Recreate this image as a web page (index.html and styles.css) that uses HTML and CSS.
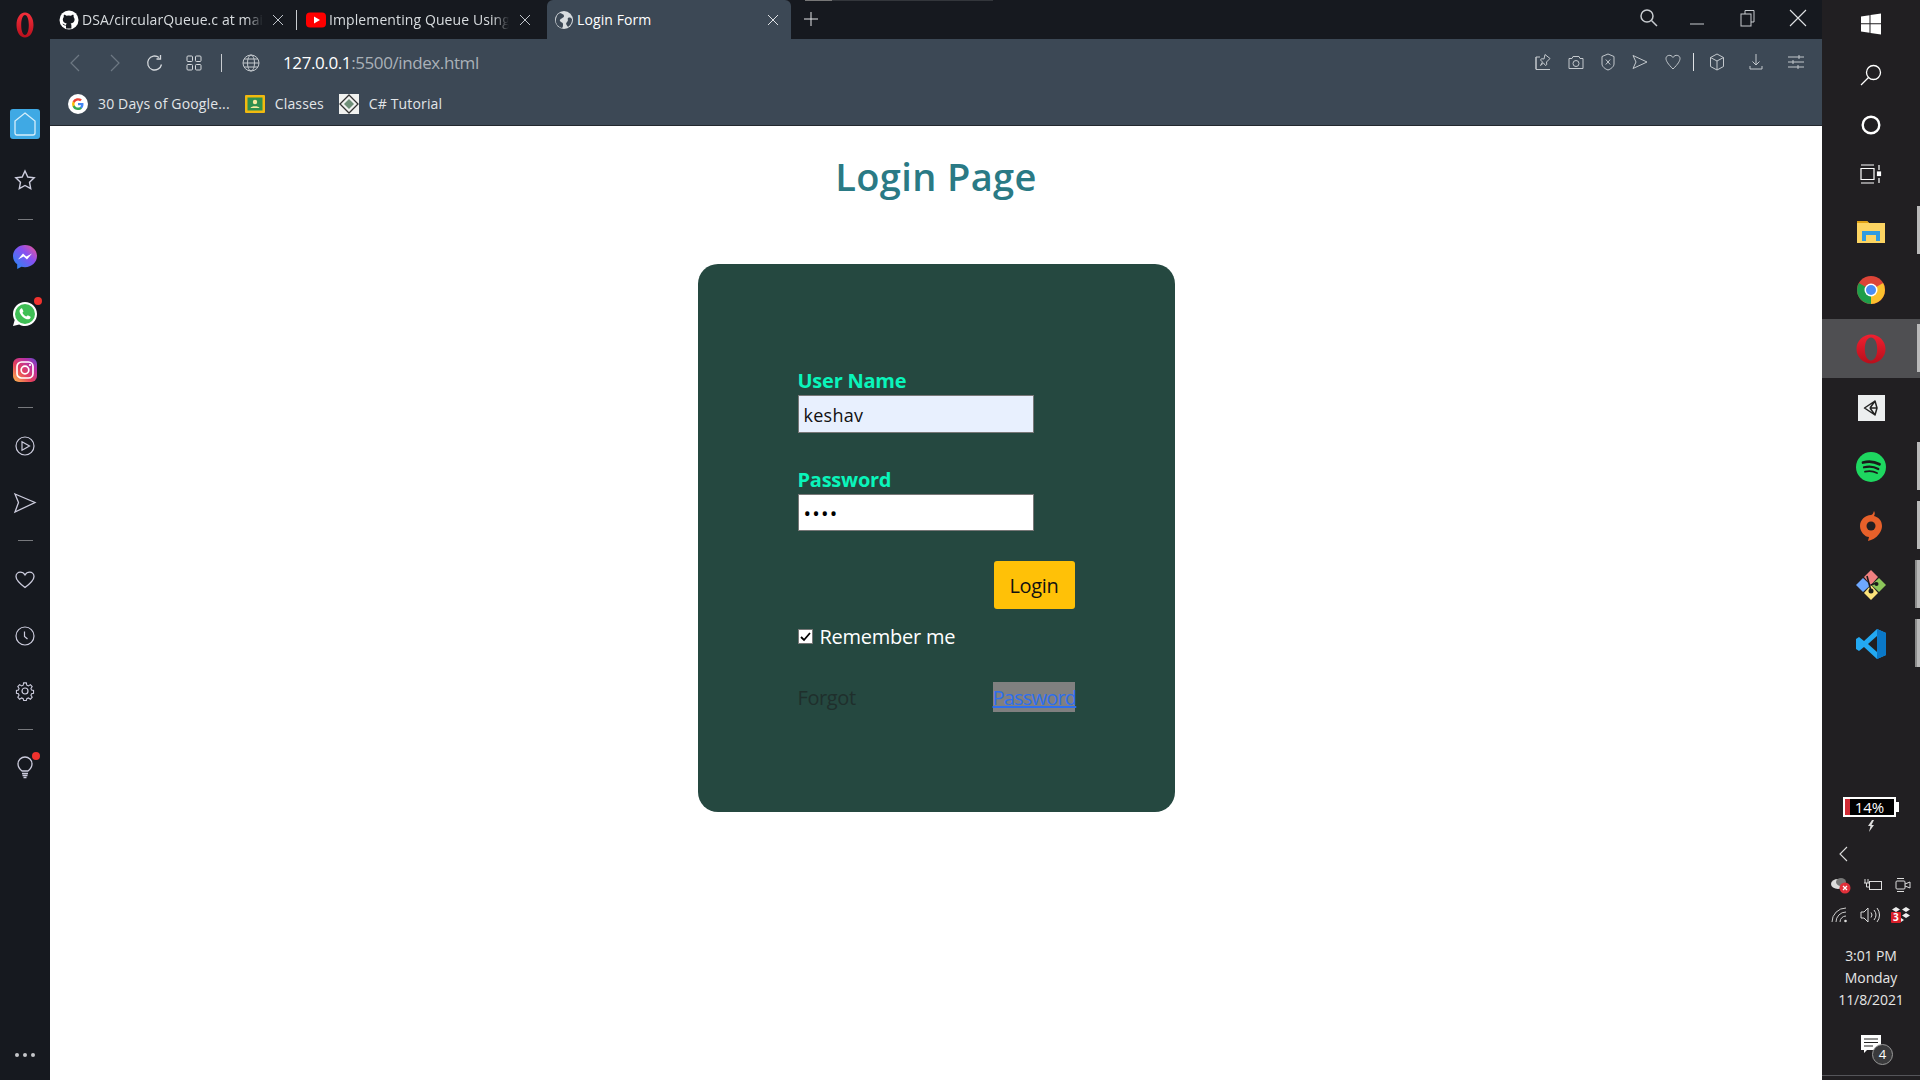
FILE: index.html
```html
<!DOCTYPE html>
<html lang="en">
<head>
    <meta charset="UTF-8">
    <meta name="viewport" content="width=device-width, initial-scale=1.0">
    <title>Login Form</title>
    <link rel="stylesheet" href="styles.css">
</head>
<body>
<div class="screen">

    <!-- Opera sidebar -->
    <aside class="sidebar">
        <svg class="opera" width="18" height="26" viewBox="0 0 18 26"><defs><linearGradient id="og" x1="0" y1="0" x2="0" y2="1"><stop offset="0" stop-color="#f5303c"/><stop offset="1" stop-color="#b80f1c"/></linearGradient></defs><path fill-rule="evenodd" d="M9 .5C4 .5.500 6 .500 13S4 25.500 9 25.500 17.500 20 17.500 13 14 .5 9 .5zM9 3c2.300 0 3.800 4.500 3.800 10S11.300 23 9 23 5.200 18.500 5.200 13 6.700 3 9 3z" fill="url(#og)"/></svg>
        <div class="side-home"><svg width="24" height="26" viewBox="0 0 24 26" fill="none" stroke="#d6eefa" stroke-width="1.3"><path d="M12 2 22 10V22Q22 24 20 24H4Q2 24 2 22V10Z"/></svg></div>
        <svg class="side-icon star" width="22" height="22" viewBox="0 0 22 22" fill="none" stroke="#ccd" stroke-width="1.4"><path d="M11 2l2.8 6 6.4.8-4.700 4.400 1.200 6.400L11 16.500 5.300 19.600l1.200-6.400L1.800 8.800 8.200 8z"/></svg>
        <div class="side-rule r1"></div>
        <svg class="side-icon msgr" width="26" height="26" viewBox="0 0 26 26"><defs><linearGradient id="mg" x1="0" y1="1" x2="1" y2="0"><stop offset="0" stop-color="#1c8df5"/><stop offset=".6" stop-color="#8a4ff0"/><stop offset="1" stop-color="#f4568c"/></linearGradient></defs><path d="M13 1C6.500 1 1 5.800 1 12c0 3.400 1.600 6.300 4.200 8.300V25l4.200-2.300c1.100.3 2.300.5 3.600.5 6.500 0 12-4.900 12-11.200S19.500 1 13 1z" fill="url(#mg)"/><path d="M6 15.500l5-6 3.300 3 5.700-3-5 6-3.300-3z" fill="#fff"/></svg>
        <div class="side-badged wa"><svg width="26" height="26" viewBox="0 0 26 26"><path d="M13 1C6.400 1 1 6.300 1 12.900c0 2.200.6 4.300 1.700 6.100L1 25l6.200-1.600c1.800 1 3.800 1.500 5.800 1.500 6.600 0 12-5.400 12-12S19.600 1 13 1z" fill="#fff"/><circle cx="13" cy="13" r="10" fill="#3fbf55"/><path d="M9 7.500c-1.500 1-2 2.800-.8 5 1.300 2.500 3.200 4.400 5.800 5.500 2 .8 3.800.2 4.500-1.200.3-.6.200-1-.3-1.300l-2-1c-.5-.2-.8-.1-1.100.3l-.7.8c-1.800-.7-3.200-2.100-4-3.900l.7-.7c.3-.3.400-.7.200-1.100l-.9-2c-.3-.6-.9-.7-1.400-.4z" fill="#fff"/></svg><span class="red-dot"></span></div>
        <svg class="side-icon ig" width="26" height="26" viewBox="0 0 26 26"><defs><linearGradient id="ig" x1="0" y1="1" x2="1" y2="0"><stop offset="0" stop-color="#fdc04e"/><stop offset=".4" stop-color="#e5405c"/><stop offset=".75" stop-color="#b52fa8"/><stop offset="1" stop-color="#5a50d0"/></linearGradient></defs><rect x="1" y="1" width="24" height="24" rx="6" fill="url(#ig)"/><rect x="5" y="5" width="16" height="16" rx="4.500" fill="none" stroke="#fff" stroke-width="1.700"/><circle cx="13" cy="13" r="3.800" fill="none" stroke="#fff" stroke-width="1.700"/><circle cx="18" cy="8" r="1.100" fill="#fff"/></svg>
        <div class="side-rule r2"></div>
        <svg class="side-icon player" width="20" height="20" viewBox="0 0 20 20" fill="none" stroke="#ccd" stroke-width="1.200"><circle cx="10" cy="10" r="9"/><path d="M7 5.800 14.500 10 7 14.200z"/></svg>
        <svg class="side-icon flow" width="24" height="22" viewBox="0 0 24 22" fill="none" stroke="#ccd" stroke-width="1.300"><path d="M2 2 22 10.500 2 20 5.500 10.500z"/></svg>
        <div class="side-rule r3"></div>
        <svg class="side-icon heart" width="20" height="18" viewBox="0 0 20 18" fill="none" stroke="#ccd" stroke-width="1.300"><path d="M10 16.500C4 12 1 9 1 5.500 1 3 3 1.200 5.300 1.200 7.200 1.200 9 2.300 10 4 11 2.300 12.800 1.200 14.700 1.200 17 1.200 19 3 19 5.500 19 9 16 12 10 16.500z"/></svg>
        <svg class="side-icon clock" width="20" height="20" viewBox="0 0 20 20" fill="none" stroke="#ccd" stroke-width="1.200"><circle cx="10" cy="10" r="9"/><path d="M9.500 5.500v5l3 2.500"/></svg>
        <svg class="side-icon gear" width="20" height="20" viewBox="0 0 20 20" fill="none" stroke="#ccd" stroke-width="1.200"><circle cx="10" cy="10" r="3"/><path d="M8.500 1h3l.5 2.500 1.800.8 2.200-1.400 2 2.200-1.400 2.200.7 1.700 2.200.5v3l-2.200.5-.7 1.700 1.400 2.200-2 2.200-2.200-1.400-1.800.8-.5 2h-3l-.5-2-1.800-.8-2.200 1.400-2-2.200 1.400-2.200-.7-1.700-2.200-.5v-3l2.200-.5.7-1.700-1.400-2.200 2-2.200 2.200 1.400 1.800-.8z" transform="translate(1 1) scale(.9)"/></svg>
        <div class="side-rule r4"></div>
        <div class="side-badged bulb"><svg width="18" height="24" viewBox="0 0 18 24" fill="none" stroke="#ccd" stroke-width="1.300"><path d="M6 16C3.500 14 2 12 2 9a7 7 0 0 1 14 0c0 3-1.500 5-4 7z"/><path d="M6 18.500h6M6.500 20.500h5M7.500 22.500h3"/></svg><span class="red-dot small"></span></div>
        <div class="side-more"><i></i><i></i><i></i></div>
    </aside>

    <div class="browser">
        <!-- tabs -->
        <div class="tabbar">
            <div class="tab t1">
                <svg class="fav" width="20" height="20" viewBox="0 0 20 20"><circle cx="10" cy="10" r="9.500" fill="#fff"/><path d="M7 18.500v-3c-2.500.4-3-1-3.500-2 2 .5 2 1.800 3.500 1.500.1-.8.400-1.200.8-1.500-2.600-.4-4-1.500-4-4 0-1 .4-1.800 1-2.500-.2-.8-.1-1.700.2-2.300 1 0 1.900.5 2.500 1a8 8 0 0 1 4.400 0c.6-.5 1.500-1 2.500-1 .3.6.4 1.500.2 2.300.6.700 1 1.500 1 2.500 0 2.500-1.400 3.600-4 4 .5.4.8 1 .8 2v3z" fill="#16191f"/></svg>
                <span class="tab-title fade">DSA/circularQueue.c at mai</span>
                <svg class="tab-x" width="14" height="14" viewBox="0 0 14 14" stroke="#bfc4ca" stroke-width="1"><path d="M2 2l10 10M12 2 2 12"/></svg>
            </div>
            <div class="tab-sep"></div>
            <div class="tab t2">
                <svg class="fav" width="20" height="16" viewBox="0 0 20 16"><rect width="20" height="15" y=".5" rx="4" fill="#f00"/><path d="M8 4.500v7l6-3.500z" fill="#fff"/></svg>
                <span class="tab-title fade">Implementing Queue Using</span>
                <svg class="tab-x" width="14" height="14" viewBox="0 0 14 14" stroke="#bfc4ca" stroke-width="1"><path d="M2 2l10 10M12 2 2 12"/></svg>
            </div>
            <div class="tab t3">
                <svg class="fav" width="18" height="18" viewBox="0 0 18 18"><circle cx="9" cy="9" r="9" fill="#d8dcdf"/><path d="M5 2c2 1 4 1 4 3S6 7 5 9s3 2 3 4 0 3-1 4C3 16 0 12 1 8s2-5 4-6zM13 7c2-1 3 0 4 1 0 3-1 6-4 8-1-2-3-3-1-5s0-3 1-4z" fill="#3c4855"/></svg>
                <span class="tab-title">Login Form</span>
                <svg class="tab-x" width="14" height="14" viewBox="0 0 14 14" stroke="#dfe2e5" stroke-width="1"><path d="M2 2l10 10M12 2 2 12"/></svg>
            </div>
            <svg class="new-tab" width="16" height="16" viewBox="0 0 16 16" stroke="#e4e6e8" stroke-width="1"><path d="M8 1v14M1 8h14"/></svg>
            <div class="window-btns">
                <svg width="20" height="20" viewBox="0 0 20 20" fill="none" stroke="#c8ccd0" stroke-width="1.500"><circle cx="8" cy="8" r="6"/><path d="M12.500 12.500 18 18"/></svg>
                <svg class="w-min" width="16" height="16" viewBox="0 0 16 16" stroke="#c8ccd0" stroke-width="1"><path d="M1 14h14"/></svg>
                <svg class="w-max" width="18" height="18" viewBox="0 0 18 18" fill="none" stroke="#c8ccd0" stroke-width="1"><rect x="2" y="5" width="10" height="12"/><path d="M6 5V1.500h9V13h-3"/></svg>
                <svg class="w-close" width="18" height="18" viewBox="0 0 18 18" stroke="#e0e2e4" stroke-width="1.100"><path d="M1 1l16 16M17 1 1 17"/></svg>
            </div>
        </div>

        <!-- address bar and bookmarks -->
        <div class="toolbar">
            <div class="addr-row">
                <svg class="nav-b" width="12" height="18" viewBox="0 0 12 18" fill="none" stroke="#6d7883" stroke-width="1.200"><path d="M10 1 2 9l8 8"/></svg>
                <svg class="nav-f" width="12" height="18" viewBox="0 0 12 18" fill="none" stroke="#6d7883" stroke-width="1.200"><path d="M2 1l8 8-8 8"/></svg>
                <svg class="nav-r" width="18" height="18" viewBox="0 0 18 18" fill="none" stroke="#d4d8dc" stroke-width="1.300"><path d="M15.500 10.500A7 7 0 1 1 13 3.500"/><path d="M14.500 1v4h-4" /></svg>
                <svg class="nav-g" width="16" height="16" viewBox="0 0 16 16" fill="none" stroke="#d4d8dc" stroke-width="1"><rect x="1" y="1" width="5.500" height="5.500" rx="1"/><rect x="9.500" y="1" width="5.500" height="5.500" rx="1"/><rect x="1" y="9.500" width="5.500" height="5.500" rx="1"/><rect x="9.500" y="9.500" width="5.500" height="5.500" rx="1"/></svg>
                <div class="addr-sep"></div>
                <svg class="nav-globe" width="18" height="18" viewBox="0 0 18 18" fill="none" stroke="#c3c8cd" stroke-width="1"><circle cx="9" cy="9" r="8"/><ellipse cx="9" cy="9" rx="3.500" ry="8"/><path d="M1 9h16M2 5h14M2 13h14"/></svg>
                <div class="url"><span class="url-host">127.0.0.1</span>:5500/index.html</div>
                <div class="tool-icons">
                    <svg width="16" height="18" viewBox="0 0 16 18" fill="none" stroke="#c3c8cd" stroke-width="1"><path d="M1 4v12.500h14M1 16V4h4"/><path d="M10 1.500l5 4-3.500 3.500.3 2.500-1.300 1-2-2.500-3 2.500 2-3.500-2-2 1-1.300 2.500.3z"/></svg>
                    <svg width="16" height="18" viewBox="0 0 16 18" fill="none" stroke="#c3c8cd" stroke-width="1"><path d="M1 5.500h3l1-2h6l1 2h3v10H1z"/><circle cx="8" cy="10.500" r="3"/></svg>
                    <svg width="14" height="18" viewBox="0 0 14 18" fill="none" stroke="#c3c8cd" stroke-width="1"><path d="M7 1l6 2.500V11c0 2.500-3 5-6 6-3-1-6-3.500-6-6V3.500z"/><path d="M4.800 6.500l4.400 5M9.200 6.500l-4.400 5"/></svg>
                    <svg width="16" height="18" viewBox="0 0 16 18" fill="none" stroke="#c3c8cd" stroke-width="1"><path d="M1 2.500 15 9 1 15.500 4 9z"/></svg>
                    <svg width="16" height="18" viewBox="0 0 16 18" fill="none" stroke="#c3c8cd" stroke-width="1"><path d="M8 16C3 11 1 8 1 5.500 1 2 6 1 8 4.500 10 1 15 2 15 5.500 15 8 13 11 8 16z"/></svg>
                    <div class="tool-sep"></div>
                    <svg width="16" height="18" viewBox="0 0 16 18" fill="none" stroke="#c3c8cd" stroke-width="1"><path d="M8 1l6.500 3.500v9L8 17l-6.500-3.500v-9zM1.500 4.500 8 8l6.500-3.500M8 8v9"/></svg>
                    <svg class="t-dl" width="14" height="18" viewBox="0 0 14 18" fill="none" stroke="#c3c8cd" stroke-width="1"><path d="M7 1v11M3.500 8.500 7 12l3.500-3.500M1 13v3h12v-3"/></svg>
                    <svg class="t-set" width="16" height="16" viewBox="0 0 16 16" fill="none" stroke="#c3c8cd" stroke-width="1"><path d="M0 3h16M0 8h16M0 13h16M11 1v4M5 6v4M10 11v4"/></svg>
                </div>
            </div>
            <div class="bookmarks">
                <div class="bm">
                    <svg width="20" height="20" viewBox="0 0 20 20"><circle cx="10" cy="10" r="10" fill="#fff"/><path d="M15.500 10.300c0-.4 0-.8-.1-1.200H10v2.200h3.100a2.700 2.700 0 0 1-1.100 1.700v1.500h1.900c1.100-1 1.600-2.500 1.600-4.200z" fill="#4285f4"/><path d="M10 16c1.600 0 2.900-.5 3.900-1.500L12 13c-.5.400-1.200.6-2 .6-1.500 0-2.800-1-3.300-2.400h-2v1.500A6 6 0 0 0 10 16z" fill="#34a853"/><path d="M6.700 11.200a3.500 3.500 0 0 1 0-2.400V7.300h-2a6 6 0 0 0 0 5.400z" fill="#fbbc05"/><path d="M10 6.400c.9 0 1.600.3 2.200.9l1.700-1.700A6 6 0 0 0 4.700 7.300l2 1.500C7.200 7.400 8.500 6.400 10 6.400z" fill="#ea4335"/></svg>
                    <span>30 Days of Google...</span>
                </div>
                <div class="bm">
                    <svg width="20" height="20" viewBox="0 0 20 20"><rect width="20" height="18" y="1" rx="1" fill="#f2b90f"/><rect x="2.500" y="3.500" width="15" height="13" fill="#2f8f4e"/><circle cx="10" cy="8" r="2.200" fill="#f7e9a0"/><path d="M5.500 14c.5-2.500 8.500-2.500 9 0z" fill="#f7e9a0"/></svg>
                    <span>Classes</span>
                </div>
                <div class="bm">
                    <svg width="20" height="20" viewBox="0 0 20 20"><rect width="20" height="20" fill="#f1f2f0"/><path d="M10 1l9 9-9 9-9-9z" fill="none" stroke="#333" stroke-width="1.300"/><path d="M10 5l5 5-5 5-5-5z" fill="#6f8f78"/></svg>
                    <span>C# Tutorial</span>
                </div>
            </div>
        </div>

        <!-- the page itself -->
        <main class="page">
            <h1 class="page-title">Login Page</h1>
            <form class="login-card">
                <label class="field-label">User Name</label>
                <input class="field filled" type="text" value="keshav">
                <label class="field-label second">Password</label>
                <input class="field secret" type="password" value="abcd">
                <div class="btn-row"><button class="login-btn" type="button">Login</button></div>
                <label class="remember"><span class="check"><svg width="11" height="10" viewBox="0 0 11 10" fill="none" stroke="#000" stroke-width="1.800"><path d="M1 5l3 3 6-7"/></svg></span>Remember me</label>
                <div class="forgot-row"><span class="forgot">Forgot</span><a class="forgot-link" href="#">Password</a></div>
            </form>
        </main>
    </div>

    <!-- windows taskbar -->
    <aside class="taskbar">
        <svg class="tb-win" width="22" height="22" viewBox="0 0 22 22" fill="#fff"><path d="M1 3.500 9.500 2.300v8H1zM10.500 2.100 21 .6v9.700H10.500zM1 11.300h8.500v8.400L1 18.500zM10.500 11.300H21v10.100l-10.500-1.500z"/></svg>
        <svg class="tb-search" width="22" height="22" viewBox="0 0 22 22" fill="none" stroke="#fff" stroke-width="1.300"><circle cx="13.500" cy="8.500" r="7"/><path d="M8.500 13.500 1 21"/></svg>
        <svg class="tb-cortana" width="20" height="20" viewBox="0 0 20 20" fill="none" stroke="#fff" stroke-width="2.400"><circle cx="10" cy="10" r="8.300"/></svg>
        <svg class="tb-view" width="22" height="20" viewBox="0 0 22 20" fill="none" stroke="#fff" stroke-width="1.200"><path d="M1 1h13M1 19h13M1 4.500h13v11H1zM19 1v5M19 14v5"/><rect x="17.500" y="8" width="3" height="3.500" fill="#fff"/></svg>
        <div class="tb-app mark"><svg width="28" height="24" viewBox="0 0 28 24"><path d="M0 2h10l2 2h16v20H0z" fill="#fcd462"/><path d="M0 2h10l2 2H0z" fill="#e0a216"/><path d="M5 22V12h18v10h-4v-6H9v6z" fill="#2f9be0"/><rect x="9" y="16" width="10" height="6" fill="#fcd462"/></svg></div>
        <div class="tb-app"><svg width="28" height="28" viewBox="0 0 28 28"><circle cx="14" cy="14" r="14" fill="#dd4437"/><path d="M14 14 26.100 7A14 14 0 0 1 14 28z" fill="#fbc02d"/><path d="M14 14 14 28A14 14 0 0 1 1.900 7z" fill="#1e9e4a"/><circle cx="14" cy="14" r="6.500" fill="#fff"/><circle cx="14" cy="14" r="5" fill="#4a8df5"/></svg></div>
        <div class="tb-app active"><svg width="30" height="30" viewBox="0 0 30 30"><defs><linearGradient id="og2" x1="0" y1="0" x2="0" y2="1"><stop offset="0" stop-color="#f02030"/><stop offset="1" stop-color="#b80f1c"/></linearGradient></defs><path fill-rule="evenodd" d="M15 .5C7 .5.500 7 .500 15S7 29.500 15 29.500 29.500 23 29.500 15 23 .5 15 .5zM15 3.500c3.800 0 6.200 5 6.200 11.500S18.800 26.500 15 26.500 8.800 21.500 8.800 15 11.200 3.500 15 3.500z" fill="url(#og2)"/></svg></div>
        <div class="tb-app"><div class="unity-tile"><svg width="18" height="18" viewBox="0 0 18 18" fill="none" stroke="#222" stroke-width="1.500" stroke-linejoin="round"><path d="M13 2 2.500 9 13 16l2-7zM8 9 13 2M8 9h7M8 9l5 7"/></svg></div></div>
        <div class="tb-app mark"><svg width="30" height="30" viewBox="0 0 30 30"><circle cx="15" cy="15" r="15" fill="#1ed760"/><g fill="none" stroke="#1a1a1a" stroke-linecap="round"><path d="M7 10.500c5-1.500 11.500-1 16.500 1.800" stroke-width="2.700"/><path d="M8 15.300c4.500-1.200 10-.8 14.300 1.700" stroke-width="2.200"/><path d="M9 19.700c4-1 8.300-.6 12 1.300" stroke-width="1.800"/></g></svg></div>
        <div class="tb-app mark"><svg width="22" height="30" viewBox="0 0 22 30"><path d="M14 0C13 3 12 4 11 4 5 4 0 9 0 15c0 6 5 11 9 11l-1 4c4-1 8-3 11-7 2-3 3-5 3-8 0-6-4-9-8-10 1-2 1-3 0-5z" fill="#e7602a"/><circle cx="11" cy="15" r="4.500" fill="#211f22"/></svg></div>
        <div class="tb-app mark wide"><svg width="30" height="30" viewBox="0 0 30 30"><path d="M15 0 22 7 15 15 8 7z" fill="#f08080"/><path d="M23 8 30 15 23 22 15.500 15z" fill="#8cc65a"/><path d="M15 15 22 23 15 30 8 23z" fill="#fce27a"/><path d="M7 8 14.500 15 7 22 0 15z" fill="#6ea8ff"/><path d="M11 6 15 21M15 15 20 13" stroke="#1a1a1a" stroke-width="1.600"/><circle cx="15" cy="21" r="2.500" fill="#1a1a1a"/><circle cx="20.500" cy="14" r="2" fill="#1a1a1a"/></svg></div>
        <div class="tb-app mark wide"><svg width="30" height="30" viewBox="0 0 30 30"><path d="M21 0 30 4v22l-9 4L8 18l-5 4-3-2v-10l3-2 5 4z" fill="#23a9f2"/><path d="M21 7 12 15l9 8z" fill="#211f22"/><path d="M21 0 30 4v22l-9 4z" fill="#0a78c8"/></svg></div>

        <div class="tray">
            <div class="battery"><span class="battery-low"></span><span class="battery-text">14%</span></div>
            <svg class="bolt" width="8" height="12" viewBox="0 0 8 12" fill="#ddd"><path d="M5 0 1 6h2.500L2 12l5-7H4.500L7 0z"/></svg>
            <svg class="tray-arrow" width="10" height="16" viewBox="0 0 10 16" fill="none" stroke="#ddd" stroke-width="1.100"><path d="M9 1 2 8l7 7"/></svg>
            <div class="tray-row">
                <div class="cloud"><svg width="20" height="18" viewBox="0 0 20 18"><ellipse cx="7" cy="8" rx="7" ry="5" fill="#ddd"/><ellipse cx="10" cy="6" rx="5" ry="4" fill="#777"/><circle cx="14" cy="12" r="5.500" fill="#e0303a"/><path d="M12 10l4 4M16 10l-4 4" stroke="#fff" stroke-width="1.200"/></svg></div>
                <svg width="20" height="14" viewBox="0 0 20 14" fill="none" stroke="#ddd" stroke-width="1"><rect x="6.500" y="3.500" width="12" height="8"/><path d="M2 1v4M5 1v4M1 5h5M3.500 5v4h3"/></svg>
                <svg width="16" height="16" viewBox="0 0 16 16" fill="none" stroke="#ddd" stroke-width="1"><rect x="1" y="4" width="9" height="8" rx="1"/><path d="M10 7l5-2v6l-5-2M2 1.500h7M2 14.500h7"/></svg>
            </div>
            <div class="tray-row">
                <svg width="18" height="16" viewBox="0 0 18 16" fill="none" stroke="#ccc" stroke-width="1"><path d="M1 15A14 14 0 0 1 15 1M5 15A10 10 0 0 1 15 5M9 15a6 6 0 0 1 6-6"/><circle cx="14.500" cy="14" r="1.300" fill="#ddd" stroke="none"/></svg>
                <svg width="20" height="16" viewBox="0 0 20 16" fill="none" stroke="#ddd" stroke-width="1"><path d="M1 5h3l4-4v14l-4-4H1zM11 5.500a4 4 0 0 1 0 5M14 3a8 8 0 0 1 0 10M17 1a11 11 0 0 1 0 14"/></svg>
                <div class="dropbox"><svg width="20" height="18" viewBox="0 0 20 18" fill="#eee"><path d="M5 1l4 2.500L5 6 1 3.500zM15 1l4 2.500L15 6l-4-2.500zM15 7l4 2.500-4 2.500-4-2.500zM10 12l3 2-3 2z"/><rect y="6" width="10" height="11" rx="1" fill="#d81f2a"/></svg><span class="dropbox-num">3</span></div>
            </div>
            <div class="clock-text"><div>3:01 PM</div><div>Monday</div><div>11/8/2021</div></div>
            <div class="notify">
                <svg width="20" height="18" viewBox="0 0 20 18"><path d="M0 0h20v15H6l-3 3v-3H0z" fill="#fff"/><path d="M3 4h14M3 7.500h14M3 11h9" stroke="#222" stroke-width="1.200"/></svg>
                <span class="notify-num">4</span>
            </div>
        </div>
    </aside>
</div>
</body>
</html>
```

FILE: styles.css
```css
* { box-sizing: border-box; }
html, body { margin: 0; height: 100%; overflow: hidden; }
body { font-family: "Open Sans", "Noto Sans", sans-serif; background: #fff; }
svg { display: block; flex: none; }

.screen { display: flex; width: 1920px; height: 1080px; }

/* Opera sidebar */
.sidebar { width: 50px; flex: none; background: #16191f; display: flex; flex-direction: column; align-items: center; }
.opera { margin-top: 12px; }
.side-home { width: 30px; height: 30px; margin-top: 71px; background: #3fa9e4; border-radius: 3px; display: flex; align-items: center; justify-content: center; }
.side-icon.star { margin-top: 30px; }
.side-rule { width: 15px; height: 1px; background: #77797d; }
.side-rule.r1 { margin-top: 28px; }
.side-icon.msgr { margin-top: 24px; }
.side-badged { position: relative; }
.side-badged.wa { margin-top: 31px; }
.side-icon.ig { margin-top: 30px; }
.side-rule.r2 { margin-top: 24px; }
.side-icon.player { margin-top: 28px; }
.side-icon.flow { margin-top: 36px; }
.side-rule.r3 { margin-top: 26px; }
.side-icon.heart { margin-top: 30px; }
.side-icon.clock { margin-top: 37px; }
.side-icon.gear { margin-top: 35px; }
.side-rule.r4 { margin-top: 28px; }
.side-badged.bulb { margin-top: 25px; }
.red-dot { position: absolute; right: -4px; top: -4px; width: 8px; height: 8px; background: #f0322e; border-radius: 50%; }
.red-dot.small { right: -6px; top: -3px; }
.side-more { margin-top: auto; margin-bottom: 23px; display: flex; gap: 4px; }
.side-more i { width: 4px; height: 4px; border-radius: 50%; background: #c4c6c9; }

.browser { flex: 1; min-width: 0; display: flex; flex-direction: column; }

/* tabs */
.tabbar { position: relative; height: 39px; flex: none; background: #16191f; display: flex; align-items: center; color: #d8dcdf; font-size: 14px; }
.tabbar::before { content: ""; position: absolute; left: 755px; top: 0; width: 188px; height: 1px; background: linear-gradient(90deg, #777 0 27px, #33363b 27px); }
.tab { height: 39px; display: flex; align-items: center; flex: none; }
.tab-title { white-space: nowrap; flex: 1; min-width: 0; letter-spacing: .1px; }
.tab-title.fade { -webkit-mask-image: linear-gradient(90deg, #000 calc(100% - 16px), transparent); mask-image: linear-gradient(90deg, #000 calc(100% - 16px), transparent); }
.tab.t1 { width: 245px; padding: 0 10px 0 9px; }
.tab.t1 .fav { margin-right: 3px; }
.tab.t1 .tab-x { margin-left: 8px; }
.tab-sep { width: 1px; height: 20px; background: #c8ccd0; flex: none; margin-left: 1px; }
.tab.t2 { width: 250px; padding: 0 15px 0 9px; }
.tab.t2 .fav { margin-right: 3px; }
.tab.t2 .tab-x { margin-left: 9px; }
.tab.t3 { width: 244px; padding: 0 11px 0 8px; background: #3c4855; border-radius: 6px 6px 0 0; color: #fff; }
.tab.t3 .fav { margin-right: 4px; }
.new-tab { margin-left: 12px; margin-bottom: 2px; }
.window-btns { margin-left: auto; padding-bottom: 3px; display: flex; align-items: center; }
.window-btns .w-min { margin-left: 30px; }
.window-btns .w-max { margin-left: 34px; }
.window-btns .w-close { margin-left: 32px; margin-right: 15px; }

/* toolbar */
.toolbar { height: 87px; flex: none; background: #3c4855; border-bottom: 1px solid #23282e; display: flex; flex-direction: column; }
.addr-row { height: 47px; display: flex; align-items: center; padding-left: 19px; }
.nav-f { margin-left: 28px; }
.nav-r { margin-left: 25px; }
.nav-g { margin-left: 22px; }
.addr-sep { width: 1px; height: 18px; background: #c8ccd0; margin-left: 19px; }
.nav-globe { margin-left: 20px; }
.url { margin-left: 23px; font-size: 17px; color: #aab1b8; letter-spacing: -.4px; }
.url-host { color: #fff; }
.tool-icons { margin-left: auto; display: flex; align-items: center; gap: 17px; padding-right: 18px; margin-top: -2px; }
.tool-sep { width: 1px; height: 18px; background: #dfe2e5; margin: 0 -2px 0 -5px; }
.tool-icons .t-dl { margin-left: 7px; }
.tool-icons .t-set { margin-left: 8px; }
.bookmarks { flex: 1; display: flex; align-items: center; padding-left: 18px; gap: 15px; padding-bottom: 4px; font-size: 14px; color: #e2e5e8; }
.bm { display: flex; align-items: center; gap: 10px; letter-spacing: .15px; }

/* page */
.page { flex: 1; background: #fff; display: flex; flex-direction: column; align-items: center; }
.page-title { margin: 25px 0 0; font-size: 38px; line-height: 50px; font-weight: 600; letter-spacing: .35px; color: #2a7a85; }
.login-card { width: 477px; height: 548px; margin-top: 63px; padding: 102px 100px 0; background: #254840; border-radius: 20px; display: flex; flex-direction: column; }
.field-label { font-size: 20px; line-height: 29px; font-weight: 700; color: #0af5bb; letter-spacing: -.25px; }
.field-label.second { margin-top: 32px; }
.field { width: 236px; height: 38px; padding: 1px 4px 0 5px; background: #fff; border: 1px solid #777; font: 18px "Open Sans", sans-serif; letter-spacing: .25px; color: #111; outline: none; }
.field.filled { background: #e8f0fe; }
.field.secret { height: 37px; font-size: 20px; letter-spacing: 1.2px; color: #000; }
.btn-row { display: flex; justify-content: flex-end; margin-top: 30px; }
.login-btn { width: 81px; height: 48px; border: 0; border-radius: 3px; background: #ffc107; font: 20px "Open Sans", sans-serif; letter-spacing: -.3px; color: #111; padding: 0; }
.remember { display: flex; align-items: center; gap: 7px; margin-top: 14px; font-size: 20px; line-height: 27px; color: #fff; letter-spacing: -.25px; }
.check { width: 15px; height: 15px; background: #fff; border: 1px solid #777; display: flex; align-items: center; justify-content: center; }
.forgot-row { display: flex; justify-content: space-between; margin-top: 32px; font-size: 20px; line-height: 32px; height: 30px; letter-spacing: -.4px; }
.forgot { color: #1f2f2c; }
.forgot-link { width: 82px; height: 30px; background: #808080; color: #2f6fed; text-align: right; letter-spacing: -.8px; white-space: nowrap; }

/* taskbar */
.taskbar { width: 98px; flex: none; background: #211f22; display: flex; flex-direction: column; align-items: center; }
.tb-win { margin-top: 13px; }
.tb-search { margin-top: 29px; }
.tb-cortana { margin-top: 29px; }
.tb-view { margin-top: 29px; }
.tb-app { width: 100%; height: 59px; display: flex; align-items: center; justify-content: center; flex: none; position: relative; }
.tb-view + .tb-app { margin-top: 17px; }
.tb-app.mark::after, .tb-app.active::after { content: ""; position: absolute; right: 0; top: 5px; width: 3px; height: 48px; background: #b9b9b9; }
.tb-app.mark.wide::after { width: 5px; background: linear-gradient(90deg, #8d8d8d 40%, #b9b9b9 40%); }
.tb-app.active { background: #4f4f52; }
.unity-tile { width: 27px; height: 26px; background: #eceeef; display: flex; align-items: center; justify-content: center; }
.tray { margin-top: auto; margin-bottom: 4px; width: 100%; display: flex; flex-direction: column; align-items: center; padding-bottom: 10px; border-bottom: 1px solid #55555a; }
.battery { position: relative; width: 53px; height: 20px; margin-right: 3px; background: #000; border: 2px solid #fff; font-size: 15px; line-height: 16px; color: #fff; text-align: center; }
.battery::after { content: ""; position: absolute; right: -5px; top: 3px; width: 3px; height: 10px; background: #fff; }
.battery-low { position: absolute; left: 0; top: 0; width: 5px; height: 16px; background: #d02b35; }
.battery-text { position: relative; }
.bolt { margin-top: 3px; }
.tray-arrow { margin-top: 14px; margin-right: 56px; }
.tray-row { width: 80px; display: flex; align-items: center; justify-content: space-between; margin-top: 14px; }
.tray-row + .tray-row { margin-top: 12px; }
.dropbox { position: relative; }
.dropbox-num { position: absolute; left: 2px; top: 5px; font-size: 10px; line-height: 12px; font-weight: 700; color: #fff; }
.clock-text { margin-top: 21px; text-align: center; font-size: 14px; line-height: 22px; color: #e6e6e6; letter-spacing: -.1px; }
.notify { position: relative; margin-top: 24px; height: 30px; width: 40px; display: flex; justify-content: center; }
.notify-num { position: absolute; left: 21px; top: 9px; width: 21px; height: 21px; border-radius: 50%; background: #3a3a3c; border: 1px solid #999; color: #fff; font-size: 13px; line-height: 19px; text-align: center; }
```
